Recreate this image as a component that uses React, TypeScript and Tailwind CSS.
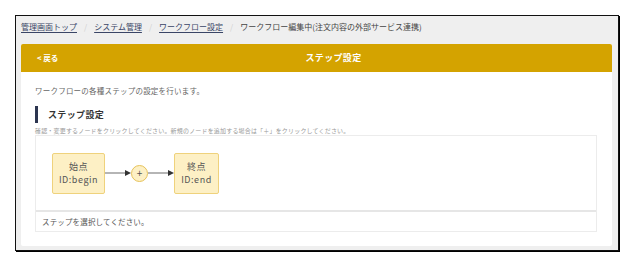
import React from "react";

function Arrow({ w }: { w: number }) {
  return (
    <svg width={w} height="10" viewBox={`0 0 ${w} 10`} className="block shrink-0">
      <line x1="0" y1="5" x2={w - 5} y2="5" stroke="#a3a3a3" strokeWidth="1.6" />
      <polygon points={`${w - 6},2 ${w},5 ${w - 6},8`} fill="#333" />
    </svg>
  );
}

function Node({ title, id, w }: { title: string; id: string; w: string }) {
  return (
    <div
      className={`${w} h-[41px] shrink-0 rounded-[2px] border border-[#efd27c] bg-[#fdf0c5] flex flex-col items-center justify-center text-[9px] leading-[13px] tracking-[0.06em] text-[#555]`}
    >
      <div>{title}</div>
      <div>{id}</div>
    </div>
  );
}

export default function App() {
  return (
    <div
      className="w-[636px] h-[277px] bg-white pt-[15px] pl-[15px]"
      style={{ fontFamily: '"Noto Sans CJK JP", "Noto Sans", sans-serif' }}
    >
      <div className="w-[604px] h-[236px] border border-[#111] shadow-[1px_1px_0_#000] bg-[#efefef] pl-[5px] pr-[6px]">
        <div className="pt-[5px] h-[28px] flex items-start text-[8px] leading-[12px] text-[#3a4566]">
          <span className="underline underline-offset-2 decoration-[#3a4566]">管理画面トップ</span>
          <span className="mx-[7px] text-[#cfcfcf]">/</span>
          <span className="underline underline-offset-2 decoration-[#3a4566]">システム管理</span>
          <span className="mx-[7px] text-[#cfcfcf]">/</span>
          <span className="underline underline-offset-2 decoration-[#3a4566]">ワークフロー設定</span>
          <span className="mx-[7px] text-[#cfcfcf]">/</span>
          <span className="text-[#444]">ワークフロー編集中(注文内容の外部サービス連携)</span>
        </div>
        <div className="bg-white rounded-[2px] h-[202px]">
          <div className="h-[28px] bg-[#d4a300] rounded-t-[2px] flex items-center text-white">
            <div className="pl-[16px] w-[44px] text-[7.5px] font-bold">&lt; 戻る</div>
            <div className="flex-1 text-center text-[9px] font-bold tracking-[0.04em] pr-[10px]">ステップ設定</div>
          </div>
          <div className="pl-[14px] pr-[15px] pt-[13px]">
            <div className="text-[7.5px] leading-[12px] tracking-[0.03em] text-[#666]">ワークフローの各種ステップの設定を行います。</div>
            <div className="mt-[9px] h-[17px] flex items-center border-l-[3px] border-[#2c3550] pl-[10px] text-[9px] font-bold tracking-[0.04em] text-[#333]">
              ステップ設定
            </div>
            <div className="mt-[4px] text-[6px] leading-[8px] tracking-[0.03em] text-[#999] whitespace-nowrap">
              確認・変更するノードをクリックしてください。新規のノードを追加する場合は「＋」をクリックしてください。
            </div>
            <div className="border border-[#ececec]">
              <div className="h-[74px] pl-[16px] flex items-center">
                <Node title="始点" id="ID:begin" w="w-[53px]" />
                <Arrow w={26} />
                <div className="w-[17px] h-[17px] shrink-0 rounded-full border border-[#e6c25a] bg-[#fdf0c5] flex items-center justify-center text-[10px] leading-none text-[#555]">
                  +
                </div>
                <Arrow w={26} />
                <Node title="終点" id="ID:end" w="w-[45px]" />
              </div>
              <div className="h-[2px] bg-[#e6e6e6]" />
              <div className="h-[19px] pl-[6px] flex items-center text-[7.5px] tracking-[0.02em] text-[#555]">
                ステップを選択してください。
              </div>
            </div>
          </div>
        </div>
      </div>
    </div>
  );
}
